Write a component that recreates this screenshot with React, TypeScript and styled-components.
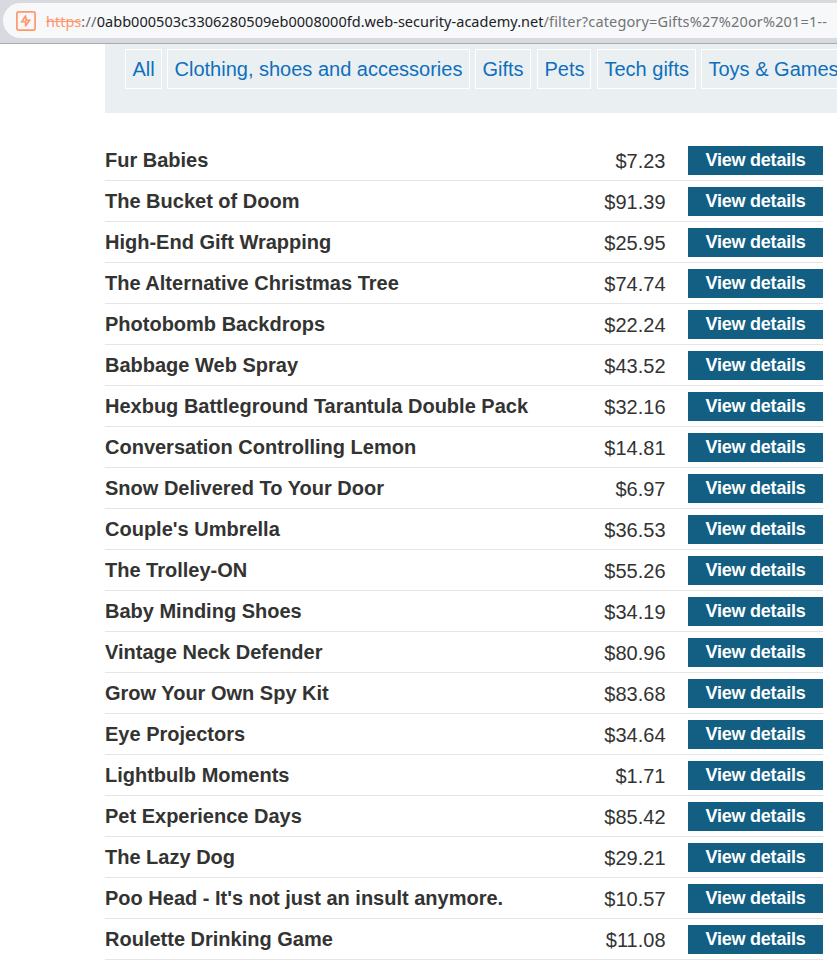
import React from 'react';
import styled, { createGlobalStyle } from 'styled-components';

const GlobalStyle = createGlobalStyle`
  * { box-sizing: border-box; }
  html, body { margin: 0; background: #fff; overflow: hidden; }
  body { font-family: "Liberation Sans", Arial, sans-serif; color: #333332; }
`;

const Page = styled.div`
  width: 837px;
  height: 964px;
  overflow: hidden;
  background: #fff;
`;

const BrowserBar = styled.header`
  height: 44px;
  padding: 3px 0 0 3px;
  background: #d9dadf;
  border-bottom: 1px solid #a9a9ad;
`;

const AddressField = styled.div`
  display: flex;
  align-items: center;
  height: 35px;
  padding-left: 13px;
  border-radius: 18px 0 0 18px;
  background: #f6f8fa;
`;

const SiteIcon = styled.svg`
  flex: none;
  width: 20px;
  height: 20px;
  margin-right: 10px;
`;

const Url = styled.div`
  display: flex;
  font: 14.5px/20px "Noto Sans", "Open Sans", sans-serif;
  white-space: pre;
`;

const UrlPart = styled.span<{ $color: string; $spacing?: number; $struck?: boolean }>`
  color: ${(p) => p.$color};
  letter-spacing: ${(p) => p.$spacing ?? 0}px;
  text-decoration: ${(p) => (p.$struck ? 'line-through' : 'none')};
`;

const Filters = styled.nav`
  display: flex;
  align-items: flex-start;
  height: 69px;
  margin-left: 105px;
  padding: 5px 0 0 20px;
  background: #eaeff2;
  overflow: hidden;
`;

const FilterLink = styled.a<{ $width: number; $gap?: number }>`
  flex: none;
  width: ${(p) => p.$width}px;
  height: 40px;
  margin-right: ${(p) => p.$gap ?? 5}px;
  padding-left: 6.5px;
  border: 1px solid #fff;
  color: #0f6fbc;
  font-size: 20px;
  line-height: 39px;
  white-space: nowrap;
`;

const Products = styled.main`
  width: 718px;
  margin: 27px 0 0 105px;
`;

const Row = styled.div`
  display: grid;
  grid-template-columns: 1fr 100px 135px;
  height: 41px;
  padding-top: 6px;
  border-bottom: 1px solid #e5e5e5;
`;

const Name = styled.span`
  font-size: 20px;
  font-weight: 700;
  line-height: 29px;
  white-space: nowrap;
`;

const Price = styled.span`
  padding-right: 22.5px;
  font-size: 20px;
  line-height: 30px;
  text-align: right;
`;

const DetailsButton = styled.a`
  height: 29px;
  background: #125f83;
  color: #fff;
  font-size: 18px;
  font-weight: 700;
  line-height: 29px;
  letter-spacing: -0.22px;
  text-align: center;
`;

const filters = [
  { label: 'All', width: 37 },
  { label: 'Clothing, shoes and accessories', width: 303 },
  { label: 'Gifts', width: 56, gap: 6 },
  { label: 'Pets', width: 54, gap: 6 },
  { label: 'Tech gifts', width: 99 },
  { label: 'Toys & Games', width: 146 },
];

const products: [string, string][] = [
  ['Fur Babies', '$7.23'],
  ['The Bucket of Doom', '$91.39'],
  ['High-End Gift Wrapping', '$25.95'],
  ['The Alternative Christmas Tree', '$74.74'],
  ['Photobomb Backdrops', '$22.24'],
  ['Babbage Web Spray', '$43.52'],
  ['Hexbug Battleground Tarantula Double Pack', '$32.16'],
  ['Conversation Controlling Lemon', '$14.81'],
  ['Snow Delivered To Your Door', '$6.97'],
  ["Couple's Umbrella", '$36.53'],
  ['The Trolley-ON', '$55.26'],
  ['Baby Minding Shoes', '$34.19'],
  ['Vintage Neck Defender', '$80.96'],
  ['Grow Your Own Spy Kit', '$83.68'],
  ['Eye Projectors', '$34.64'],
  ['Lightbulb Moments', '$1.71'],
  ['Pet Experience Days', '$85.42'],
  ['The Lazy Dog', '$29.21'],
  ["Poo Head - It's not just an insult anymore.", '$10.57'],
  ['Roulette Drinking Game', '$11.08'],
];

export default function App() {
  return (
    <Page>
      <GlobalStyle />
      <BrowserBar>
        <AddressField>
          <SiteIcon viewBox="0 0 20 20" fill="none" stroke="#ff966c">
            <rect x="0.9" y="0.9" width="18.2" height="18.2" rx="1.8" strokeWidth="1.7" />
            <path d="M10 4.2 5.8 10.7H9.6V15.6M9.6 15 13.6 9.4H10V6" strokeWidth="1.6" />
          </SiteIcon>
          <Url>
            <UrlPart $color="#ff966c" $struck>https</UrlPart>
            <UrlPart $color="#66686b" $spacing={0.25}>://</UrlPart>
            <UrlPart $color="#202124" $spacing={0.03}>0abb000503c3306280509eb0008000fd.web-security-academy.net</UrlPart>
            <UrlPart $color="#737476" $spacing={0.15}>/filter?category=Gifts%27%20or%201=1--</UrlPart>
          </Url>
        </AddressField>
      </BrowserBar>
      <Filters>
        {filters.map((f) => (
          <FilterLink key={f.label} $width={f.width} $gap={f.gap}>{f.label}</FilterLink>
        ))}
      </Filters>
      <Products>
        {products.map(([name, price]) => (
          <Row key={name}>
            <Name>{name}</Name>
            <Price>{price}</Price>
            <DetailsButton>View details</DetailsButton>
          </Row>
        ))}
      </Products>
    </Page>
  );
}
